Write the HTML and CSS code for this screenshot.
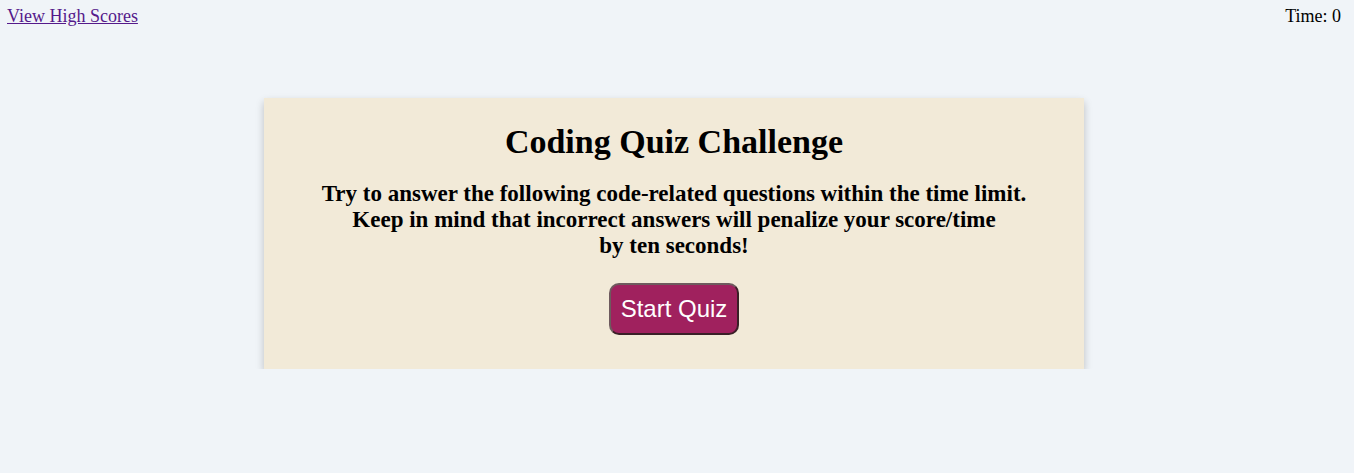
FILE: index.html
```html
<!DOCTYPE html>
<html>
<head>
<meta charset="utf-8">
<link rel="stylesheet" href="styles.css">
</head>
<body>
<header class="top">
  <a class="scores" href="#">View High Scores</a>
  <div class="timer">Time: <span>0</span></div>
</header>
<main class="card">
  <h1 class="title">Coding Quiz Challenge</h1>
  <p class="intro">Try to answer the following code-related questions within the time limit.<br>Keep in mind that incorrect answers will penalize your score/time<br>by ten seconds!</p>
  <button class="start">Start Quiz</button>
</main>
</body>
</html>
```
FILE: styles.css
```css
html, body {
  margin: 0;
  background: #f0f4f8;
}
body {
  font-family: "Liberation Serif", "Times New Roman", serif;
  color: #000;
}
.top {
  display: flex;
  justify-content: space-between;
  padding: 5px 13px 0 7px;
  font-size: 18px;
  line-height: 22px;
}
.scores {
  color: #551a8b;
  text-decoration: underline;
}
.card {
  width: 820px;
  margin: 71px 0 0 calc(50% - 413px);
  background: #f2ead8;
  box-shadow: 0 4px 8px rgba(0, 0, 0, 0.22);
  display: flex;
  flex-direction: column;
  align-items: center;
  padding: 24px 0 34px;
  box-sizing: border-box;
}
.title {
  margin: 0;
  font-size: 34px;
  line-height: 40px;
  font-weight: bold;
}
.intro {
  margin: 19px 0 0;
  text-align: center;
  font-weight: bold;
  font-size: 23px;
  line-height: 26px;
}
.start {
  margin-top: 24px;
  background: #a0215e;
  color: #fff;
  font-family: "Liberation Sans", Arial, sans-serif;
  font-size: 24px;
  line-height: 28px;
  padding: 10px 10px;
  border: 2px solid;
  border-color: #6e5a5e #3a1f27 #3a1f27 #6e5a5e;
  border-radius: 10px;
}
```
